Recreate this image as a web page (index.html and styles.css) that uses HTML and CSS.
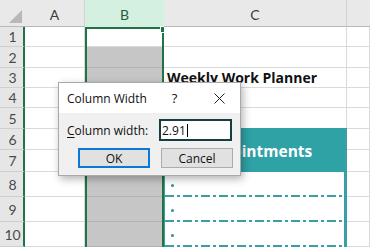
FILE: index.html
```html
<!DOCTYPE html>
<html>
<head>
<meta charset="utf-8">
<link rel="stylesheet" href="styles.css">
</head>
<body>
<div class="sheet">
  <div class="col col-rh">
    <div class="corner"><span class="tri"></span></div>
    <div class="rowhead r1">1</div>
    <div class="rowhead r2">2</div>
    <div class="rowhead r3">3</div>
    <div class="rowhead r4">4</div>
    <div class="rowhead r5">5</div>
    <div class="rowhead r6">6</div>
    <div class="rowhead r7">7</div>
    <div class="rowhead r8">8</div>
    <div class="rowhead r9">9</div>
    <div class="rowhead r10">10</div>
  </div>
  <div class="col col-a">
    <div class="colhead">A</div>
    <div class="cell r1"></div><div class="cell r2"></div><div class="cell r3"></div><div class="cell r4"></div><div class="cell r5"></div>
    <div class="cell r6"></div><div class="cell r7"></div><div class="cell r8"></div><div class="cell r9"></div><div class="cell r10"></div>
  </div>
  <div class="col col-b">
    <div class="colhead sel">B</div>
    <div class="selection">
      <span class="handle"></span>
      <div class="cell active r1s"></div>
      <div class="cell gray r2"></div><div class="cell gray r3"></div><div class="cell gray r4"></div><div class="cell gray r5"></div>
      <div class="cell gray r6"></div><div class="cell gray r7"></div><div class="cell gray r8"></div><div class="cell gray r9"></div><div class="cell gray r10"></div>
    </div>
  </div>
  <div class="col col-c">
    <div class="colhead">C</div>
    <div class="cell r1"></div><div class="cell r2"></div>
    <div class="cell r3 title-cell"><span class="title">Weekly Work Planner</span></div>
    <div class="cell r4"></div><div class="cell r5"></div>
    <div class="appt">
      <div class="appt-head">Appointments</div>
      <div class="appt-item"><span class="dot"></span></div>
      <div class="appt-item"><span class="dot"></span></div>
      <div class="appt-item"><span class="dot"></span></div>
    </div>
  </div>
  <div class="col col-d">
    <div class="colhead last"></div>
    <div class="cell r1"></div><div class="cell r2"></div><div class="cell r3"></div><div class="cell r4"></div><div class="cell r5"></div>
    <div class="cell r6"></div><div class="cell r7"></div><div class="cell r8"></div><div class="cell r9"></div><div class="cell r10"></div>
  </div>
</div>

<div class="dialog">
  <div class="dlg-title">
    <span class="dlg-name">Column Width</span>
    <span class="dlg-help">?</span>
    <svg class="dlg-close" width="11" height="11" viewBox="0 0 11 11"><path d="M0.5 0.5 L10.5 10.5 M10.5 0.5 L0.5 10.5" stroke="#222" stroke-width="1" fill="none"/></svg>
  </div>
  <div class="dlg-body">
    <div class="dlg-row">
      <span class="dlg-label"><u>C</u>olumn width:</span>
      <div class="dlg-input">2.91<span class="caret"></span></div>
    </div>
    <div class="dlg-buttons">
      <div class="btn btn-ok">OK</div>
      <div class="btn">Cancel</div>
    </div>
  </div>
</div>
</body>
</html>
```

FILE: styles.css
```css
* { box-sizing: border-box; }
html, body { margin: 0; padding: 0; }
body {
  width: 370px;
  height: 247px;
  overflow: hidden;
  position: relative;
  background: #fff;
  font-family: Lato, "Liberation Sans", sans-serif;
}
.sheet {
  display: flex;
  align-items: flex-start;
}
.col { display: flex; flex-direction: column; flex: none; }
.col-rh { width: 25px; }
.col-a { width: 60px; }
.col-b { width: 79px; }
.col-c { width: 183px; position: relative; z-index: 1; }
.col-d { width: 23px; }

.r1 { height: 20px; }
.r1s { height: 18px; }
.r2 { height: 21px; }
.r3 { height: 20px; }
.r4 { height: 20px; }
.r5 { height: 21px; }
.r6 { height: 21px; }
.r7 { height: 22px; }
.r8, .r9, .r10 { height: 25px; }

.corner {
  height: 27px;
  background: #e9e9e9;
  border-bottom: 1px solid #b9b9b9;
  position: relative;
}
.tri {
  position: absolute;
  right: 3px;
  bottom: 3px;
  width: 0;
  height: 0;
  border-left: 13px solid transparent;
  border-bottom: 13px solid #b8b8b8;
}
.colhead {
  height: 27px;
  background: #e9e9e9;
  border-bottom: 1px solid #b9b9b9;
  border-right: 1px solid #d2d2d2;
  display: flex;
  align-items: center;
  justify-content: center;
  font-size: 14px;
  color: #3c3c3c;
  padding-top: 2px;
}
.colhead.sel {
  background: #d3f0e0;
  color: #1f5e3d;
  border-right: none;
  border-bottom: none;
}
.colhead.last { border-right: none; }
.rowhead {
  background: #e6e6e6;
  border-bottom: 1px solid #cfcfcf;
  border-right: 2px solid #217346;
  display: flex;
  align-items: center;
  justify-content: center;
  font-size: 14px;
  color: #4a4a4a;
  padding-left: 2px;
}
.cell {
  border-right: 1px solid #dadada;
  border-bottom: 1px solid #dadada;
  background: #fff;
}
.selection {
  border: 2px solid #217346;
  border-bottom: none;
  position: relative;
  display: flex;
  flex-direction: column;
}
.selection .cell { border-right: none; }
.cell.gray {
  background: #c6c6c6;
  border-bottom: 1px solid #b2b2b2;
}
.handle {
  position: absolute;
  right: -4px;
  top: -2px;
  width: 5px;
  height: 5px;
  background: #217346;
  outline: 1px solid #fff;
}
.title-cell {
  display: flex;
  align-items: flex-end;
  white-space: nowrap;
  padding-left: 3px;
}
.title {
  font-family: "Open Sans", Lato, sans-serif;
  font-weight: 700;
  font-size: 14px;
  line-height: 18px;
  color: #111;
}
.appt {
  height: 119px;
  margin-top: -1px;
  display: flex;
  flex-direction: column;
  border-right: 3px solid #3a9fa3;
  border-left: 1px solid #3a9fa3;
  background: #fff;
}
.appt-head {
  height: 44px;
  background: #2fa2a6;
  color: #fff;
  font-family: "Open Sans", Lato, sans-serif;
  font-weight: 700;
  font-size: 15.5px;
  display: flex;
  align-items: center;
  justify-content: center;
  padding-left: 5px;
  padding-top: 1px;
}
.appt-item {
  height: 25px;
  display: flex;
  align-items: flex-start;
  padding-left: 6px;
  padding-top: 12px;
  background-image: repeating-linear-gradient(to right, #3a9fa3 0 9px, transparent 9px 12px, #3a9fa3 12px 15px, transparent 15px 18px);
  background-size: 100% 2px;
  background-position: 0 100%;
  background-repeat: no-repeat;
}
.dot {
  width: 3px;
  height: 3px;
  border-radius: 50%;
  background: #2f8f93;
}
.dialog {
  position: absolute;
  z-index: 2;
  left: 58px;
  top: 82px;
  width: 183px;
  height: 94px;
  border: 1px solid #a9a9a9;
  background: #f0f0f0;
  box-shadow: 2px 3px 8px rgba(0, 0, 0, 0.3);
  font-family: "Open Sans", "Noto Sans", sans-serif;
  font-size: 12px;
  color: #111;
  display: flex;
  flex-direction: column;
}
.dlg-title {
  height: 30px;
  background: #fff;
  display: flex;
  align-items: center;
  padding-left: 8px;
}
.dlg-name { font-size: 12px; }
.dlg-help { font-size: 13px; margin-left: 25px; }
.dlg-close { display: block; margin-left: 37px; }
.dlg-body {
  flex: 1;
  padding: 6px 7px 0 8px;
  display: flex;
  flex-direction: column;
}
.dlg-row {
  display: flex;
  align-items: center;
  justify-content: space-between;
  padding-right: 1px;
}
.dlg-label u { text-decoration-thickness: 1px; text-underline-offset: 2px; }
.dlg-input {
  width: 73px;
  height: 22px;
  border: 2px solid #143f40;
  background: #fff;
  display: flex;
  align-items: center;
  padding-left: 1px;
  font-size: 12px;
}
.caret {
  display: inline-block;
  width: 1px;
  height: 13px;
  background: #000;
  margin-left: 1px;
}
.dlg-buttons {
  display: flex;
  justify-content: flex-end;
  gap: 11px;
  margin-top: 7px;
}
.btn {
  width: 72px;
  height: 20px;
  background: #e1e1e1;
  border: 1px solid #adadad;
  display: flex;
  align-items: center;
  justify-content: center;
  font-size: 12px;
}
.btn-ok { border: 2px solid #0a78d4; }
```
